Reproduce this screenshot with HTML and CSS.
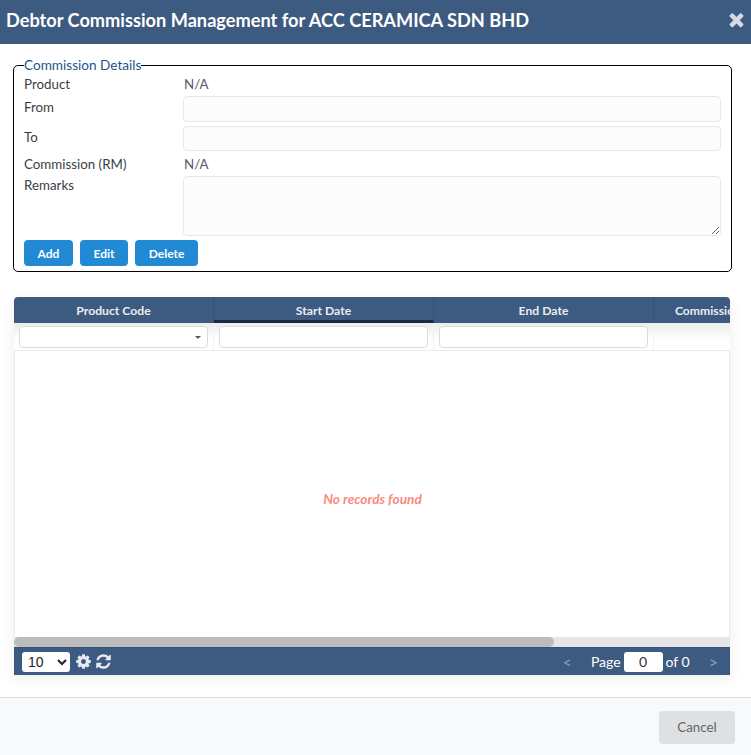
FILE: index.html
```html
<!DOCTYPE html>
<html lang="en">
<head>
<meta charset="utf-8">
<title>Debtor Commission Management</title>
<link rel="stylesheet" href="styles.css">
</head>
<body>
<div class="dialog">
  <header class="titlebar">
    <h1>Debtor Commission Management for ACC CERAMICA SDN BHD</h1>
    <svg class="close" viewBox="0 0 1792 1792" width="21" height="21"><path d="M1490 1322q0 40-28 68l-136 136q-28 28-68 28t-68-28l-294-294-294 294q-28 28-68 28t-68-28l-136-136q-28-28-28-68t28-68l294-294-294-294q-28-28-28-68t28-68l136-136q28-28 68-28t68 28l294 294 294-294q28-28 68-28t68 28l136 136q28 28 28 68t-28 68l-294 294 294 294q28 28 28 68z" fill="#d5dbe3"/></svg>
  </header>
  <main class="content">
    <fieldset class="details">
      <legend>Commission Details</legend>
      <div class="form">
        <div class="label row-first">Product</div><div class="value row-first">N/A</div>
        <label class="label label-field" for="from">From</label><input id="from" class="field" type="text">
        <label class="label label-field" for="to">To</label><input id="to" class="field field-to" type="text">
        <div class="label row-text">Commission (RM)</div><div class="value row-text">N/A</div>
        <label class="label label-field" for="remarks">Remarks</label><textarea id="remarks" class="field area"></textarea>
      </div>
      <div class="actions">
        <button class="btn btn-add" type="button">Add</button>
        <button class="btn btn-edit" type="button">Edit</button>
        <button class="btn btn-delete" type="button">Delete</button>
      </div>
    </fieldset>

    <section class="grid">
      <div class="scroller">
        <div class="heads">
          <div class="head">Product Code</div>
          <div class="head sorted">Start Date</div>
          <div class="head">End Date</div>
          <div class="head">Commission (RM)</div>
        </div>
        <div class="filters">
          <div class="filter"><div class="combo"><span class="caret"></span></div></div>
          <div class="filter"><input class="filter-input" type="text"></div>
          <div class="filter"><input class="filter-input" type="text"></div>
          <div class="filter"></div>
        </div>
      </div>
      <div class="empty">No records found</div>
      <div class="scrolltrack"><div class="scrollthumb"></div></div>
      <div class="pager">
        <div class="pager-left">
          <select class="size"><option>10</option></select>
          <svg class="tool tool-gear" viewBox="0 0 1792 1792" width="17" height="17"><path fill="#e6ebf1" d="M1152 896q0-106-75-181t-181-75-181 75-75 181 75 181 181 75 181-75 75-181zm512-109v222q0 12-8 23t-20 13l-185 28q-19 54-39 91 35 50 107 138 10 12 10 25t-9 23q-27 37-99 108t-94 71q-12 0-26-9l-138-108q-44 23-91 38-16 136-29 186-7 28-36 28h-222q-14 0-24.500-8.500t-11.500-21.500l-28-184q-49-16-90-37l-141 107q-10 9-25 9-14 0-25-11-126-114-165-168-7-10-7-23 0-12 8-23 15-21 51-66.500t54-70.500q-27-50-41-99l-183-27q-13-2-21-12.500t-8-23.500v-222q0-12 8-23t19-13l186-28q14-46 39-92-40-57-107-138-10-12-10-24 0-10 9-23 26-36 98.500-107.500t94.500-71.500q13 0 26 10l138 107q44-23 91-38 16-136 29-186 7-28 36-28h222q14 0 24.500 8.500t11.500 21.500l28 184q49 16 90 37l142-107q9-9 24-9 13 0 25 10 129 119 165 170 7 8 7 22 0 12-8 23-15 21-51 66.500t-54 70.500q26 50 41 98l183 28q13 2 21 12.500t8 23.500z"/></svg>
          <svg class="tool" viewBox="0 0 1792 1792" width="17" height="17"><path fill="#e6ebf1" d="M1639 1056q0 5-1 7-64 268-268 434.500t-478 166.500q-146 0-282.500-55t-243.500-157l-129 129q-19 19-45 19t-45-19-19-45v-448q0-26 19-45t45-19h448q26 0 45 19t19 45-19 45l-137 137q71 66 161 102t187 36q134 0 250-65t186-179q11-17 53-117 8-23 30-23h192q13 0 22.500 9.500t9.500 22.500zm25-800v448q0 26-19 45t-45 19h-448q-26 0-45-19t-19-45 19-45l138-138q-148-137-349-137-134 0-250 65t-186 179q-11 17-53 117-8 23-30 23h-199q-13 0-22.500-9.500t-9.500-22.500v-7q65-268 270-434.500t480-166.500q146 0 284 55.500t245 156.500l130-129q19-19 45-19t45 19 19 45z"/></svg>
        </div>
        <div class="pager-right">
          <span class="nav nav-prev">&lt;</span>
          <span class="page-word">Page</span>
          <input class="page-input" type="text" value="0">
          <span class="page-of">of 0</span>
          <span class="nav nav-next">&gt;</span>
        </div>
      </div>
    </section>
  </main>
  <footer class="footer">
    <button class="cancel" type="button">Cancel</button>
  </footer>
</div>
</body>
</html>
```

FILE: styles.css
```css
* { box-sizing: border-box; }
html, body { margin: 0; height: 100%; }
body {
  font-family: Lato, "Open Sans", sans-serif;
  font-size: 13.33px;
  color: #3b3f44;
  background: #fff;
  overflow: hidden;
}
.dialog { display: flex; flex-direction: column; height: 755px; }

.titlebar {
  height: 44px;
  flex: none;
  background: #3d5a80;
  display: flex;
  align-items: center;
  justify-content: space-between;
  padding: 0 4px 5px 6px;
  color: #fff;
}
.titlebar h1 { margin: 0; font-size: 18.2px; font-weight: 700; line-height: 24px; }

.content { flex: 1; padding: 14px 20px 0 13px; }

.details {
  margin: 0;
  width: 718px;
  height: 214px;
  padding: 0 10px;
  border: 1px solid #000;
  border-radius: 5px;
}
.details legend {
  padding: 0;
  font-size: 13.6px;
  line-height: 14px;
  color: #1f5488;
}
.form {
  display: grid;
  grid-template-columns: 159px 538px;
  margin-top: 2px;
}
.label { line-height: 20px; color: #3b3f44; }
.row-first { height: 22px; line-height: 20px; }
.row-text { height: 20px; line-height: 20px; margin-top: 3px; }
.label-field { padding-top: 1px; }
.value { color: #555a60; padding-left: 1px; }
.field {
  display: block;
  border: 1px solid #e8e8e8;
  border-radius: 4px;
  background: #fcfcfc;
  height: 26px;
  width: 538px;
  margin: 0 0 4px;
  font: inherit;
  outline: none;
}
.field-to { height: 25px; margin-bottom: 0; }
.area { height: 60px; margin: 2px 0 4px; resize: vertical; }
.actions { display: flex; gap: 7px; }
.btn {
  height: 26px;
  border: 0;
  border-radius: 4px;
  background: #228ad4;
  color: #fff;
  font: 700 12px Lato, sans-serif;
  padding: 0;
}
.btn-add { width: 49px; }
.btn-edit { width: 48px; }
.btn-delete { width: 63px; }

.grid {
  position: relative;
  width: 716px;
  height: 378px;
  margin: 25px 0 0 1px;
  border-radius: 4px 4px 0 0;
  box-shadow: 0 4px 14px rgba(0, 0, 0, .07);
  display: flex;
  flex-direction: column;
  overflow: hidden;
}
.scroller { overflow: hidden; flex: none; border-bottom: 1px solid #ececec; }
.heads, .filters { display: grid; grid-template-columns: 200px 220px 220px 138px; width: 778px; }
.heads { height: 26px; grid-template-rows: 26px; background: #3d5a80; }
.head {
  color: #e9edf2;
  font-weight: 700;
  font-size: 12.2px;
  line-height: 27px;
  text-align: center;
  white-space: nowrap;
  border-right: 1px solid #37517a;
}
.sorted { border-bottom: 3px solid #1b2a41; }
.filters {
  height: 27px;
  background: linear-gradient(#ececec, #fff 60%);
}
.filter { padding: 3px 5px 0; border-right: 1px solid #f2f2f2; }
.combo {
  position: relative;
  height: 22px;
  width: 189px;
  background: #fff;
  border: 1px solid #dcdcdc;
  border-radius: 4px;
}
.caret {
  position: absolute;
  right: 6px;
  top: 9px;
  border: 3.5px solid transparent;
  border-top: 3.5px solid #555;
  border-bottom: 0;
}
.filter-input {
  display: block;
  width: 209px;
  height: 22px;
  background: #fff;
  border: 1px solid #dcdcdc;
  border-radius: 4px;
  outline: none;
}
.empty {
  flex: 1;
  display: flex;
  align-items: center;
  justify-content: center;
  color: #f98a7e;
  font-style: italic;
  font-weight: 700;
  font-size: 13.7px;
  border-left: 1px solid #ececec;
  border-right: 1px solid #ececec;
  padding: 9px 0 0 1px;
}
.scrolltrack { height: 10px; flex: none; background: #e6e6e6; }
.scrollthumb { width: 540px; height: 10px; background: #bcbcbc; border-radius: 5px; }
.pager {
  height: 28px;
  flex: none;
  background: #3d5a80;
  border-top: 1px solid #33507a;
  display: flex;
  align-items: center;
  justify-content: space-between;
  padding: 0 12px 0 8px;
  color: #fff;
}
.pager-left { display: flex; align-items: center; gap: 3px; }
.size {
  width: 48px;
  height: 20px;
  border: 0;
  border-radius: 3px;
  background: #fff;
  font: 14px "Liberation Sans", sans-serif;
  color: #222;
  padding-left: 2px;
}
.tool { display: block; }
.tool-gear { margin-left: 2px; }
.pager-right { display: flex; align-items: center; }
.nav { color: #8da0b8; font-size: 16px; }
.nav-prev { margin-right: 19px; }
.nav-next { margin-left: 19px; }
.page-word, .page-of { font-size: 14px; color: #fff; }
.page-input {
  width: 39px;
  height: 20px;
  margin: 0 3px;
  border: 0;
  border-radius: 3px;
  background: #fff;
  text-align: center;
  font: 14px Lato, sans-serif;
  color: #333;
  outline: none;
}

.footer {
  flex: none;
  height: 58px;
  background: #f8f9fb;
  border-top: 1px solid #dedede;
  display: flex;
  justify-content: flex-end;
  align-items: flex-start;
  padding: 13px 16px 0 0;
}
.cancel {
  width: 76px;
  height: 33px;
  border: 0;
  border-radius: 4px;
  background: #dfe0e2;
  color: #62666b;
  font: 13.33px Lato, sans-serif;
  padding: 0 0 2px;
}
```
